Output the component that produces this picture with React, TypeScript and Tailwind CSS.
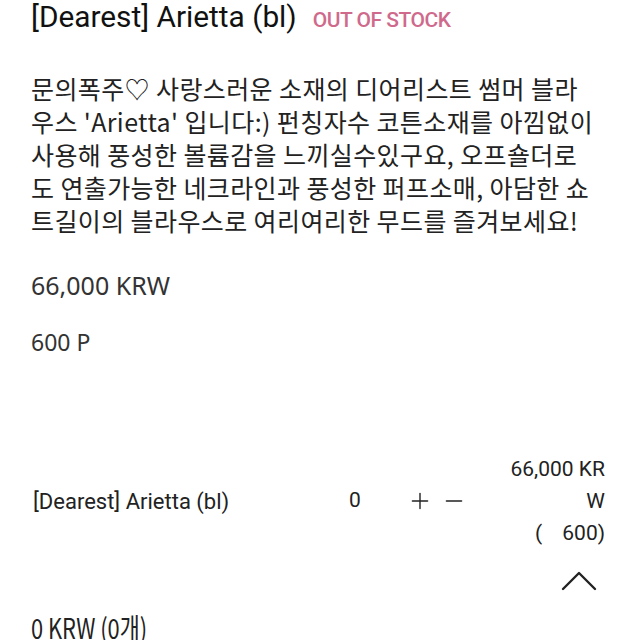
import { ChevronUp, Minus, Plus } from 'lucide-react'

const desc = [
  '문의폭주♡ 사랑스러운 소재의 디어리스트 썸머 블라',
  "우스 'Arietta' 입니다:) 펀칭자수 코튼소재를 아낌없이",
  '사용해 풍성한 볼륨감을 느끼실수있구요, 오프숄더로',
  '도 연출가능한 네크라인과 풍성한 퍼프소매, 아담한 쇼',
  '트길이의 블라우스로 여리여리한 무드를 즐겨보세요!',
]

export default function App() {
  return (
    <div className="w-[640px] h-[640px] overflow-hidden bg-white px-[31px] text-[#222] font-['Roboto','Noto_Sans_CJK_KR',sans-serif]">
      <div className="flex items-baseline gap-[16px] h-[34px]">
        <h1 className="text-[29.8px] leading-[34px] text-[#111]">[Dearest] Arietta (bl)</h1>
        <span className="text-[21px] font-medium tracking-[-0.5px] text-[#cf6a8c]">OUT OF STOCK</span>
      </div>

      <div className="mt-[38px] text-[25px] leading-[33px] text-[#222] font-['Noto_Sans_CJK_KR',sans-serif] tracking-[0.4px] whitespace-nowrap">
        {desc.map((line, i) => (
          <div key={i}>{line}</div>
        ))}
      </div>

      <p className="mt-[32px] text-[25px] leading-[32px] text-[#333] font-['Noto_Sans',sans-serif]">66,000 KRW</p>
      <p className="mt-[25px] text-[23px] leading-[32px] text-[#333] font-['Noto_Sans',sans-serif]">600 P</p>

      <div className="mt-[95px] flex items-center pr-[4px]">
        <div className="w-[318px] pl-[2px] text-[22px]">[Dearest] Arietta (bl)</div>
        <div className="w-[58px] text-[21px]">0</div>
        <div className="flex items-center gap-[8px]">
          <button><Plus size={26} strokeWidth={1.3} /></button>
          <button><Minus size={26} strokeWidth={1.3} /></button>
        </div>
        <div className="ml-auto w-[100px] text-right text-[21px] leading-[32px] break-all">
          <div>66,000 KRW</div>
          <div>
            (<span className="inline-block w-[20px]"></span>600)
          </div>
        </div>
      </div>

      <div className="flex justify-end mt-[12px] -mr-[2px]">
        <ChevronUp size={64} strokeWidth={0.9} className="text-[#222] -my-[12px]" />
      </div>

      <p className="mt-[10px] text-[28px] leading-[32px] font-['Noto_Sans_CJK_KR',sans-serif] origin-left scale-x-[0.78] whitespace-nowrap">0 KRW (0개)</p>
    </div>
  )
}
